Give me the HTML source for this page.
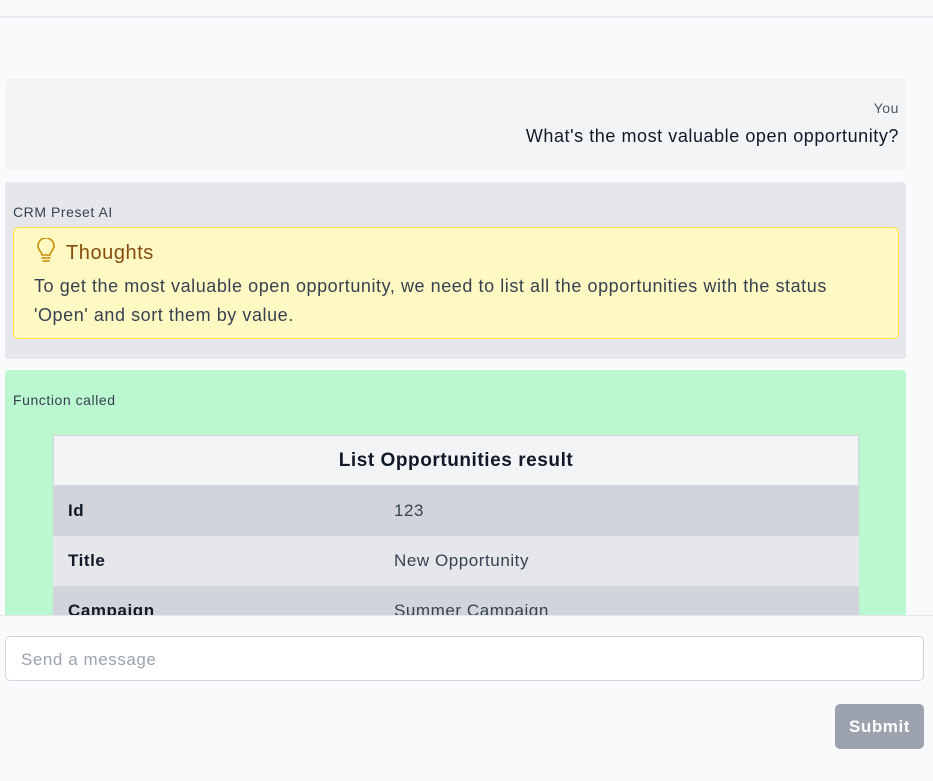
<!DOCTYPE html>
<html><head><style>
*{box-sizing:border-box;margin:0;padding:0}
body{width:933px;height:781px;overflow:hidden;background:#f9fafb;font-family:"Liberation Sans","DejaVu Sans",sans-serif;position:relative;color:#111827;letter-spacing:0.035em}
.a{position:absolute}
</style></head><body>
<div class="a" style="left:0;top:0;width:933px;height:18px;border-bottom:2px solid #e5e7eb;background:#f9fafb"></div>
<div class="a" style="left:5px;top:79px;width:901px;height:92px;background:#f3f4f6;border-radius:4px">
 <div class="a" style="right:7px;top:21px;font-size:14px;color:#4b5563">You</div>
 <div class="a" style="right:7px;top:47px;font-size:18px;color:#111827">What's the most valuable open opportunity?</div>
</div>
<div class="a" style="left:5px;top:182px;width:901px;height:177px;background:#e5e7eb;border-radius:4px">
 <div class="a" style="left:8px;top:22px;font-size:14px;color:#374151">CRM Preset AI</div>
 <div class="a" style="left:8px;top:45px;width:886px;height:112px;background:#fef9c3;border:1px solid #fde047;border-radius:5px">
  <svg class="a" style="left:22px;top:10px" width="20" height="26" viewBox="0 0 20 26" fill="none" stroke="#ca8a04" stroke-width="1.6" stroke-linecap="round"><path d="M6 17c0-3-4-5-4-9a8 8 0 0 1 16 0c0 4-4 6-4 9z"/><path d="M6 20h8M7 23h6"/></svg>
  <div class="a" style="left:52px;top:14px;font-size:20px;color:#854d0e">Thoughts</div>
  <div class="a" style="left:20px;top:44px;width:820px;font-size:18px;line-height:29px;color:#374151">To get the most valuable open opportunity, we need to list all the opportunities with the status 'Open' and sort them by value.</div>
 </div>
</div>
<div class="a" style="left:5px;top:370px;width:901px;height:260px;background:#bbf7d0;border-radius:4px">
 <div class="a" style="left:8px;top:22px;font-size:14px;color:#374151">Function called</div>
 <div class="a" style="left:48px;top:65px;width:806px;height:200px;background:#d1d5db">
  <div style="height:51px;background:#f3f4f6;border:1px solid #d1d5db;text-align:center;font-weight:bold;font-size:19px;line-height:50px">List Opportunities result</div>
  <div style="height:50px;background:#d1d5db;position:relative;font-size:17px;line-height:50px"><b class="a" style="left:15px">Id</b><span class="a" style="left:341px;color:#374151">123</span></div>
  <div style="height:50px;background:#e5e7eb;position:relative;font-size:17px;line-height:50px"><b class="a" style="left:15px">Title</b><span class="a" style="left:341px;color:#374151">New Opportunity</span></div>
  <div style="height:50px;background:#d1d5db;position:relative;font-size:17px;line-height:50px"><b class="a" style="left:15px">Campaign</b><span class="a" style="left:341px;color:#374151">Summer Campaign</span></div>
 </div>
</div>
<div class="a" style="left:0;top:615px;width:933px;height:166px;background:#f9fafb;border-top:1px solid #e5e7eb"></div>
<div class="a" style="left:5px;top:636px;width:919px;height:45px;background:#fff;border:1px solid #d1d5db;border-radius:5px;font-size:17px;color:#9ca3af;padding:13px 15px">Send a message</div>
<div class="a" style="left:835px;top:704px;width:89px;height:45px;background:#9ca3af;border-radius:5px;color:#fff;font-weight:bold;font-size:17px;text-align:center;line-height:45px">Submit</div>
</body></html>
